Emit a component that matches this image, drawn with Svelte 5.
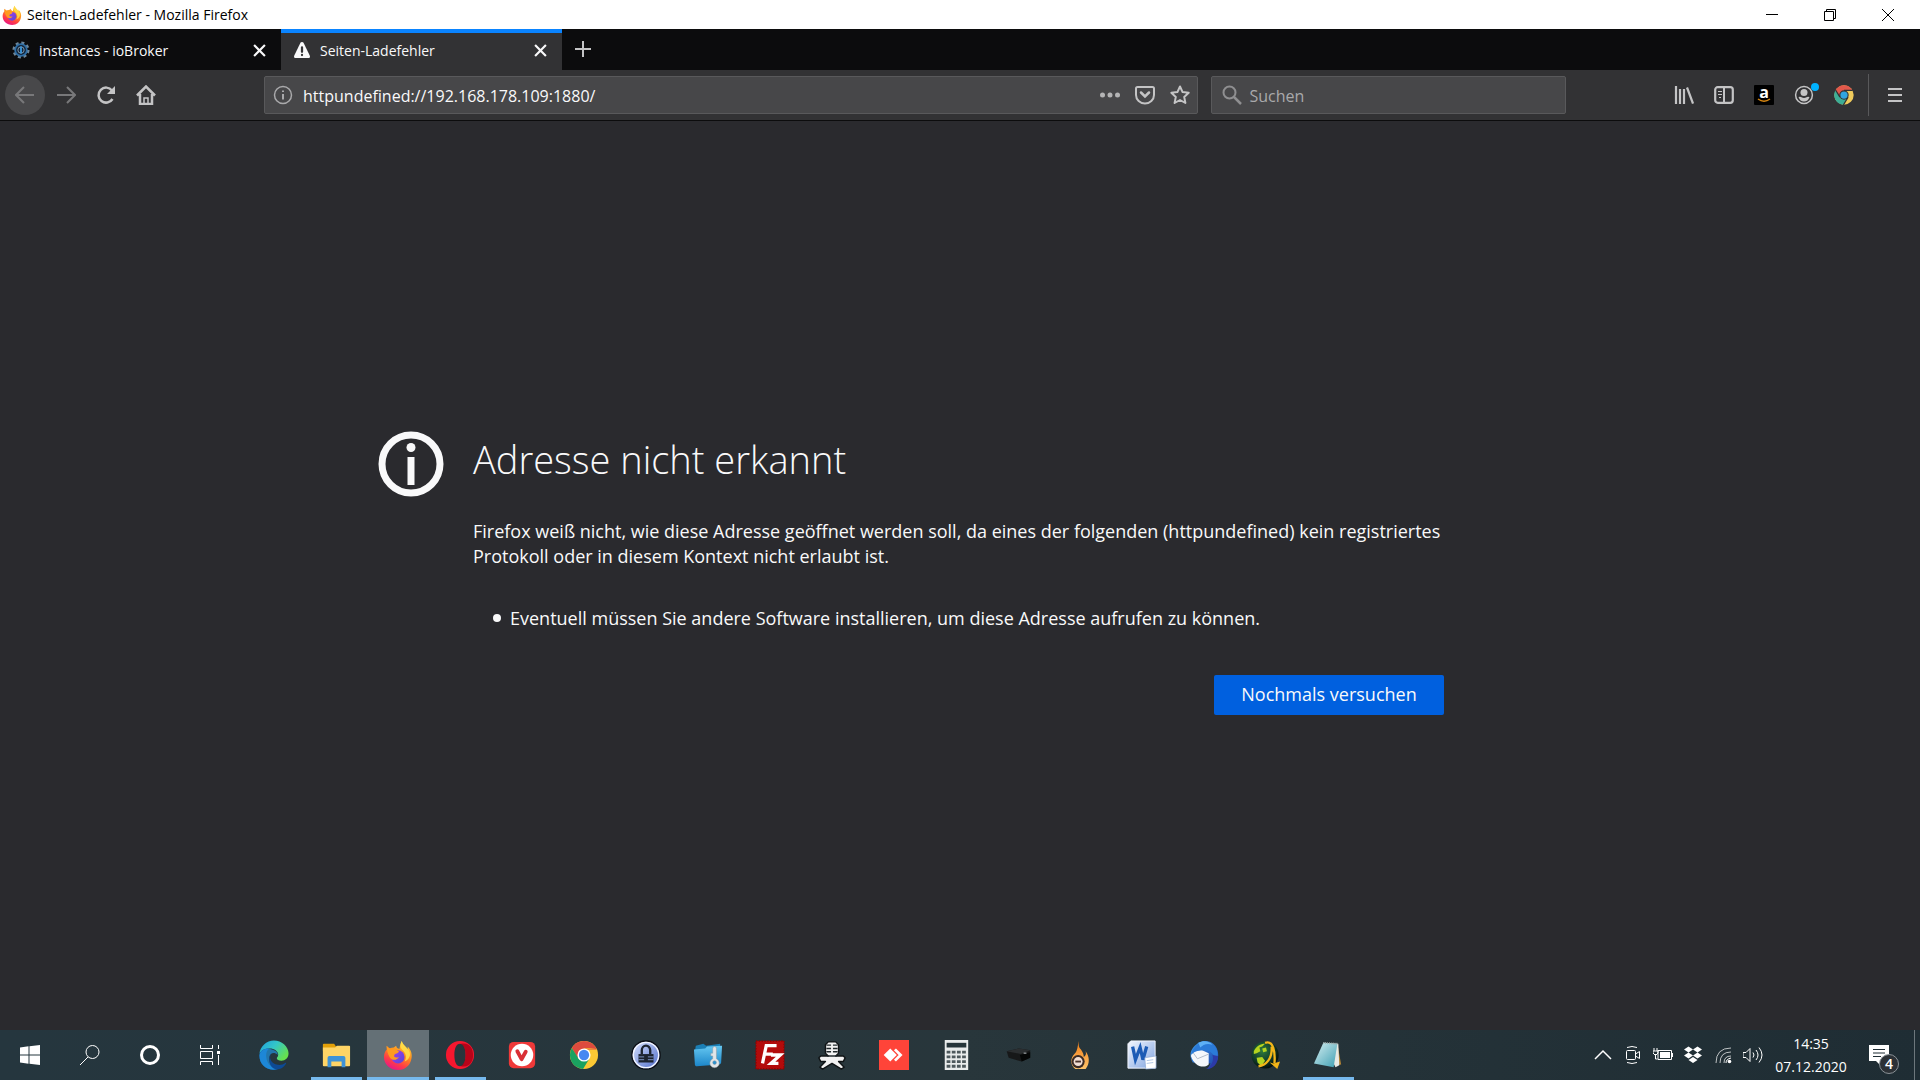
<script lang="ts">
    let url = "httpundefined://192.168.178.109:1880/";
    let search = "";

    let tabs = [
        { title: "instances - ioBroker", icon: "gear" },
        { title: "Seiten-Ladefehler", icon: "warning" },
    ];
    let activeTab = 1;

    const apps = [
        { name: "Microsoft Edge", icon: edge },
        { name: "Explorer", icon: explorer, running: true },
        { name: "Firefox", icon: firefox, running: true, active: true },
        { name: "Opera", icon: opera, running: true },
        { name: "Vivaldi", icon: vivaldi },
        { name: "Chrome", icon: chrome },
        { name: "KeePass", icon: keepass },
        { name: "WinSCP", icon: keyFolder },
        { name: "FileZilla", icon: filezilla },
        { name: "Aufnahme", icon: mic },
        { name: "AnyDesk", icon: anydesk },
        { name: "Rechner", icon: calculator },
        { name: "Drucker", icon: printer },
        { name: "Brennen", icon: flame },
        { name: "Word", icon: word },
        { name: "Thunderbird", icon: thunderbird },
        { name: "JDownloader", icon: jdownloader },
        { name: "Editor", icon: notepad, running: true },
    ];
</script>

{#snippet firefox()}
    <svg viewBox="0 0 32 32">
        <path fill="url(#ff-body)" d="M20 1c1 4 4 5 6 9 .5-1 .5-2 .3-3 4 4 5 9 4 13-1 7-7 12-14 12C8 32 1 26 1 18c0-3 1-6 3-8l-.2-4C5 7 6 8 7 9c1.300-.7 3-1 4.500-1L14 6c.3 2 1.500 3 3.500 3.500C18 7 18.500 4 20 1z" />
        <path fill="#ffe14a" d="M20 1c-2 4-2 7 1 10 3 3 5 7 2 12 5-2 7-7 5-11-2-5-7-6-8-11z" opacity=".85" />
        <circle cx="16" cy="18" r="7" fill="url(#ff-core)" />
        <path fill="#ff9a1f" d="M4 6.500c2 2 3 2.500 4 2.500 3-1 5 .5 6 1.500l3 1.500c-1 3-4 2-5 4-1 3 3 3 5 2-2 4-8 4-10 0-2-3-3-7-3-11.500z" />
    </svg>
{/snippet}

{#snippet chrome()}
    <svg viewBox="0 0 32 32">
        <circle cx="16" cy="16" r="15" fill="#fcc934" />
        <path fill="#dd4b3e" d="M3 8.500A15 15 0 0 1 29 8.500L16 9 9.500 19.500z" />
        <path fill="#1aa260" d="M3 8.500A15 15 0 0 0 15 31L22 19.500 16 22 10 19.500z" />
        <path fill="#dd4b3e" d="M29 8.500A15 15 0 0 1 29.500 10H16z" />
        <circle cx="16" cy="16" r="7" fill="#fff" />
        <circle cx="16" cy="16" r="5.500" fill="#4688f1" />
    </svg>
{/snippet}

{#snippet chromeMuted()}
    <svg viewBox="0 0 32 32">
        <circle cx="16" cy="16" r="15.500" fill="#f0cb5c" />
        <path fill="#e2584b" d="M2.500 8A15.500 15.500 0 0 1 29.500 8.500H16L9.500 19.500z" />
        <path fill="#3dae96" d="M2.500 8A15.500 15.500 0 0 0 15 31.500L22 20 16 22 10 19.500z" />
        <path stroke="#323234" stroke-width="2" d="M16 8.500h14M9.500 19.500L2.500 8M22.500 19.500L15 32" />
        <circle cx="16" cy="16" r="7.500" fill="#323234" />
        <circle cx="16" cy="16" r="5.800" fill="#2fa4e0" />
    </svg>
{/snippet}

{#snippet edge()}
    <svg viewBox="0 0 32 32">
        <path fill="url(#edge-top)" d="M.5 15C1 7 8 .5 16 .5S31.500 7 31.500 14c0 5-3.500 8-7.500 8-3 0-5-1-5-2.500 0-1 1.500-1.500 1.500-4 0-4-5-7-10-6.500C6 9.500 2 11 .5 15z" />
        <path fill="#1570cc" d="M.5 16C1 11 6 8.500 11 9c-3 2-4 6-3 11 1 6 6 10 12 11C9 34 0 26 .5 16z" />
        <path fill="#2191dc" d="M.5 16C2 10 9 8.500 14 10c4 1 6 3 6 6-4-4-8-2-9 2-1 6 3 12 9 13C8 34 0 26 .5 16z" opacity=".7" />
        <path fill="#0d4a94" d="M13 14.500c-3 5 0 11 7 12 3 .5 6-.5 8-2 .8-.5 1.200 0 .8.800C25 31 20 32 17 31c-6-2-8-11-4-16.500z" />
    </svg>
{/snippet}

{#snippet explorer()}
    <svg viewBox="0 0 32 32">
        <path fill="#e3a008" d="M2 5a1 1 0 0 1 1-1h11l2 3H30v5H2z" />
        <path fill="#ffd566" d="M2 8h13l2-2h13a1 1 0 0 1 1 1v20a1 1 0 0 1-1 1H3a1 1 0 0 1-1-1z" />
        <path fill="#3f93d6" d="M7 19a2 2 0 0 1 2-2h15a2 2 0 0 1 2 2v10h-4v-6H11v6H7z" />
    </svg>
{/snippet}

{#snippet opera()}
    <svg viewBox="0 0 32 32">
        <path fill="#f5172f" fill-rule="evenodd" d="M16 1a15 15 0 1 0 0 30 15 15 0 0 0 0-30zm0 3c4 0 6 5 6 12s-2 12-6 12-6-5-6-12 2-12 6-12z" />
        <path fill="#a70014" d="M17 4c9-2 13 5 13 12s-4 14-13 12c3-2 5-6 5-12s-2-10-5-12z" opacity=".8" />
    </svg>
{/snippet}

{#snippet vivaldi()}
    <svg viewBox="0 0 32 32">
        <rect x="2" y="2" width="28" height="28" rx="5" fill="#ef3939" />
        <circle cx="16" cy="16" r="12" fill="#fff" />
        <path d="M11 12l4.500 8.500 4.500-8" fill="none" stroke="#d92f35" stroke-width="4" stroke-linecap="round" stroke-linejoin="round" />
    </svg>
{/snippet}

{#snippet keepass()}
    <svg viewBox="0 0 32 32">
        <circle cx="16" cy="16" r="15" fill="url(#kp)" stroke="#0b0d12" stroke-width="1.500" />
        <circle cx="16" cy="16" r="13.500" fill="none" stroke="#f2f5ff" stroke-width="1.500" />
        <path d="M11.500 15v-4a4.500 5 0 0 1 9 0v4" fill="none" stroke="#1c2330" stroke-width="2.500" />
        <path fill="#1c2330" d="M8 15h16v9H8z" />
        <path stroke="#8096c8" d="M8 18h6m4 0h6M8 21h6m4 0h6" />
    </svg>
{/snippet}

{#snippet keyFolder()}
    <svg viewBox="0 0 32 32">
        <path fill="#1b7fb5" d="M3 6l8-2 3 2 15-2v8H2z" />
        <path fill="url(#kf)" d="M1 10l12-1 2-2 16-1-1 18c0 1-1 2-2 2L4 28c-1 0-2-1-2-2z" />
        <path fill="#e2e5e8" stroke="#8c969d" stroke-width=".5" fill-rule="evenodd" d="M21 9a2 2 0 0 1 4 0v11a5 5 0 1 1-4 0v-3h-2v-3h2zm2 13a2 2 0 1 0 0 4 2 2 0 0 0 0-4z" />
    </svg>
{/snippet}

{#snippet filezilla()}
    <svg viewBox="0 0 32 32">
        <rect x="1" y="1" width="30" height="30" fill="#b30b0b" stroke="#8a0505" stroke-width="1.500" stroke-dasharray="1.500 1.500" />
        <path d="M8 25l4-19h11M10 15h9M17 16h10l-10 9h8" fill="none" stroke="#fff" stroke-width="3.500" />
    </svg>
{/snippet}

{#snippet mic()}
    <svg viewBox="0 0 32 32">
        <path d="M12 2h8l3 3v9l-3 3h8l2 2-2 4h-5l6 6-3 2-10-6-10 6-3-2 6-6H4l-2-4 2-2h8l-3-3V5z" fill="#f2f2f2" stroke="#101416" stroke-width="1.500" stroke-linejoin="round" />
        <path d="M10 5.500h5m2 0h5M10 9h5m2 0h5M10 12.500h5m2 0h5M11 17h10" stroke="#20282b" stroke-width="1.500" />
    </svg>
{/snippet}

{#snippet anydesk()}
    <svg viewBox="0 0 32 32">
        <path fill="#ff4439" d="M0 0h32v32H0z" />
        <path fill="#fff" d="M5 16l7-7 7 7-7 7z" />
        <path d="M17 10l6 6-6 6" fill="none" stroke="#fff" stroke-width="3" />
    </svg>
{/snippet}

{#snippet calculator()}
    <svg viewBox="0 0 32 32">
        <rect x="4" y="0" width="25" height="32" fill="#e9ecec" />
        <path fill="#26353a" d="M6 3h21v5H6z" />
        <path stroke="#4d585c" stroke-width="3" stroke-dasharray="4 1.500" d="M6 13h21M6 18h21M6 23h21M6 28h21" />
    </svg>
{/snippet}

{#snippet printer()}
    <svg viewBox="0 0 32 32">
        <path fill="#171819" d="M4 12l13-3 12 2v8l-9 4-14-4z" />
        <path fill="#2b2e30" d="M4 12l13-3 12 2-10 4z" />
        <path fill="#050606" d="M18 16l11-3v6l-9 4z" />
        <path stroke="#c8ced0" d="M22 14h3" />
    </svg>
{/snippet}

{#snippet flame()}
    <svg viewBox="0 0 32 32">
        <path fill="url(#flame)" d="M15 1c-1 5 0 7 2 9 2 3 3 5 3 8 2-1 3-3 2-6 4 5 5 13 0 19H11C5 26 6 19 10 15c4-4 3-9 5-14z" />
        <circle cx="14" cy="23" r="7" fill="#3b2b25" />
        <circle cx="14" cy="23" r="4.800" fill="#f1ddd3" />
        <path stroke="#4a332b" stroke-width="2" d="M11 23h6" />
    </svg>
{/snippet}

{#snippet word()}
    <svg viewBox="0 0 32 32">
        <path fill="url(#word)" stroke="#f4f8ff" d="M4 1h26v29H1V4z" />
        <path d="M6 7l3 14 5-13 3 13 4-14" fill="none" stroke="#1c5bb5" stroke-width="3.500" />
        <path fill="#fff" stroke="#8ba7d2" stroke-width=".7" d="M19 19l12-2v13l-11 1z" />
        <path stroke="#aec4e4" d="M21 22l7-1M21 25l7-1" />
    </svg>
{/snippet}

{#snippet thunderbird()}
    <svg viewBox="0 0 32 32">
        <path fill="url(#tb)" d="M10 3c9-5 20 0 21 11 1 8-3 14-11 17l3-6L4 24C-1 15 2 9 10 3z" />
        <path fill="#f4f7fb" d="M2 17c2-5 7-6 12-6l7 3v12c-6 5-15 2-19-9z" />
        <path d="M4 13l5 7 12-5" fill="none" stroke="#aeb9c7" />
        <path fill="#2b7bd8" d="M6 8c4-6 14-8 20-3 5 4 6 12 3 18-1-7-6-12-13-12-4 0-8 0-13 4 0-3 1-5 3-7z" />
        <path fill="#5db0f5" d="M10 3c5-3 12-2 15 2-6-2-10 0-13 3z" />
        <path fill="#2c3aa8" d="M25 16c2 6-1 12-7 15 8 0 13-6 13-14z" />
    </svg>
{/snippet}

{#snippet jdownloader()}
    <svg viewBox="0 0 32 32">
        <circle cx="15" cy="16" r="14.500" fill="url(#globe)" />
        <path fill="#b4d41f" d="M3 12c3-6 7-8 12-8l-3 3-3 1 1 4-4 2-3 1zM12 9l4-1 1 4-4 1zM6 19l6-1 3 4-4 6-4-4z" />
        <path d="M15 3c9-3 11 10 10 22M8 28c8-1 15-8 14-21" fill="none" stroke="#f2b519" stroke-width="2.500" />
        <path fill="#f2b519" d="M20 24l4 1 7-2-3 8z" />
    </svg>
{/snippet}

{#snippet notepad()}
    <svg viewBox="0 0 32 32">
        <path fill="#b38434" d="M26 4l4 22-5 1z" />
        <path fill="#e8e9e3" d="M11 3l16 1 1 23-4 2z" />
        <path fill="url(#note)" d="M11 3l15 1-4 25-21-4z" />
        <path stroke="#9da9a8" stroke-width="2" stroke-dasharray="1 1" d="M11 3l15 1" />
    </svg>
{/snippet}

<!-- gradients shared by the application icons -->
<svg class="defs" aria-hidden="true">
    <defs>
        <linearGradient id="ff-body" x1=".8" y1="0" x2=".3" y2="1">
            <stop offset="0" stop-color="#ffdf3c" />
            <stop offset=".45" stop-color="#ff8a1e" />
            <stop offset=".75" stop-color="#ff3b47" />
            <stop offset="1" stop-color="#e5158b" />
        </linearGradient>
        <linearGradient id="ff-core" x1="0" y1="0" x2="1" y2="1">
            <stop offset="0" stop-color="#a63bea" />
            <stop offset="1" stop-color="#5548d9" />
        </linearGradient>
        <linearGradient id="edge-top" x1="0" y1="0" x2="1" y2=".6">
            <stop offset="0" stop-color="#1f9de0" />
            <stop offset=".5" stop-color="#33c6c8" />
            <stop offset="1" stop-color="#66e04e" />
        </linearGradient>
        <linearGradient id="kp" x2="1" y2="1">
            <stop offset="0" stop-color="#dbe5ff" />
            <stop offset="1" stop-color="#4a68c9" />
        </linearGradient>
        <linearGradient id="kf" x2="0" y2="1">
            <stop offset="0" stop-color="#66c8f2" />
            <stop offset="1" stop-color="#1c86c9" />
        </linearGradient>
        <linearGradient id="flame" x2="0" y2="1">
            <stop offset="0" stop-color="#f07c16" />
            <stop offset="1" stop-color="#ffc46a" />
        </linearGradient>
        <linearGradient id="word" x2="1" y2="1">
            <stop offset="0" stop-color="#f4f8ff" />
            <stop offset="1" stop-color="#7fa3e0" />
        </linearGradient>
        <linearGradient id="tb" x2="1" y2="1">
            <stop offset="0" stop-color="#3f9fee" />
            <stop offset="1" stop-color="#1c3ea6" />
        </linearGradient>
        <radialGradient id="globe" cx=".4" cy=".35" r=".65">
            <stop offset="0" stop-color="#2f7a3c" />
            <stop offset=".6" stop-color="#12402c" />
            <stop offset="1" stop-color="#06100e" />
        </radialGradient>
        <linearGradient id="note" x2="1" y2="1">
            <stop offset="0" stop-color="#d6eff2" />
            <stop offset="1" stop-color="#3e9fb2" />
        </linearGradient>
    </defs>
</svg>

<div class="desktop">
    <header class="titlebar">
        <span class="logo">{@render firefox()}</span>
        <span class="caption">Seiten-Ladefehler - Mozilla Firefox</span>
        <div class="window-buttons">
            <button aria-label="Minimieren">
                <svg viewBox="0 0 12 12"><path d="M0 5.500h12" /></svg>
            </button>
            <button aria-label="Verkleinern">
                <svg viewBox="0 0 12 12"><path d="M.5 2.500h9v9h-9zM2.500 2.500v-2h9v9h-2" /></svg>
            </button>
            <button aria-label="Schließen">
                <svg viewBox="0 0 12 12"><path d="M0 0l12 12M12 0L0 12" /></svg>
            </button>
        </div>
    </header>

    <nav class="tabs">
        {#each tabs as tab, i}
            <div class="tab" class:selected={i === activeTab}>
                <button class="tab-label" on:click={() => (activeTab = i)}>
                    {#if tab.icon === "gear"}
                        <svg viewBox="0 0 20 20">
                            <circle cx="10" cy="10" r="8" fill="none" stroke="#6f8799" stroke-width="3" stroke-dasharray="3.300 3" />
                            <circle cx="10" cy="10" r="6.500" fill="#10243a" stroke="#2f6ea5" stroke-width="2" />
                            <circle cx="10" cy="10" r="3.500" stroke="#8fa3b0" stroke-width="1" />
                            <path stroke="#3d9be0" stroke-width="2" d="M10 6v8" />
                        </svg>
                    {:else}
                        <svg viewBox="0 0 20 20">
                            <path fill="#f9f9fa" d="M10 1c.8 0 1.400.4 1.700 1l7 14.300c.6 1.300-.2 2.700-1.700 2.700H3c-1.500 0-2.300-1.400-1.700-2.700L8.300 2c.3-.6.900-1 1.700-1z" />
                            <path stroke="#323234" stroke-width="2.500" stroke-linecap="round" d="M10 7v5M10 15.500v.1" />
                        </svg>
                    {/if}
                    <span>{tab.title}</span>
                </button>
                <button class="tab-close" aria-label="Tab schließen">
                    <svg viewBox="0 0 12 12"><path d="M1 1l10 10M11 1L1 11" /></svg>
                </button>
            </div>
        {/each}
        <button class="new-tab" aria-label="Neuer Tab">
            <svg viewBox="0 0 18 18"><path d="M9 1v16M1 9h16" /></svg>
        </button>
    </nav>

    <div class="toolbar">
        <div class="nav-buttons">
            <button class="back" aria-label="Zurück" disabled>
                <svg viewBox="0 0 20 20"><path d="M19 10H2M9 2l-8 8 8 8" /></svg>
            </button>
            <button class="dim" aria-label="Vor" disabled>
                <svg viewBox="0 0 20 20"><path d="M1 10h17M11 2l8 8-8 8" /></svg>
            </button>
            <button aria-label="Neu laden">
                <svg viewBox="0 0 20 20">
                    <path d="M16 5.500A7.500 7.500 0 1 0 16.500 14" stroke-width="2.500" />
                    <path d="M19 1v8h-8z" fill="#c4c4c5" stroke="none" />
                </svg>
            </button>
            <button aria-label="Startseite">
                <svg viewBox="0 0 20 20">
                    <path d="M1 10.500L10 1.500l9 9M4 9v10h12V9" stroke-width="2.500" />
                    <path d="M8 19v-6h4v6" stroke-width="1.500" />
                </svg>
            </button>
        </div>

        <div class="field urlbar">
            <svg class="info" viewBox="0 0 20 20">
                <circle cx="10" cy="10" r="8.500" />
                <path d="M10 9v5.500M10 5.500v1.500" stroke-width="2" />
            </svg>
            <input type="text" aria-label="Adresse" spellcheck="false" bind:value={url} />
            <button aria-label="Seitenaktionen">
                <svg viewBox="0 0 20 20">
                    <g fill="#b4b4b5" stroke="none">
                        <circle cx="2.500" cy="10" r="2.500" /><circle cx="10" cy="10" r="2.500" /><circle cx="17.500" cy="10" r="2.500" />
                    </g>
                </svg>
            </button>
            <button aria-label="Bei Pocket speichern">
                <svg viewBox="0 0 20 20">
                    <path d="M2.500 2h15q1.500 0 1.500 1.500V10a9 8.500 0 0 1-18 0V3.500Q1 2 2.500 2z" />
                    <path d="M6 7.500l4 4 4-4" stroke-width="2.500" stroke-linecap="round" />
                </svg>
            </button>
            <button aria-label="Lesezeichen setzen">
                <svg viewBox="0 0 20 20">
                    <path d="M10 1.500l2.600 5.600 6.100.7-4.500 4.100 1.200 6.100L10 15l-5.400 3 1.200-6.100L1.300 7.800l6.100-.7z" stroke-linejoin="round" />
                </svg>
            </button>
        </div>

        <label class="field searchbar">
            <svg class="loupe" viewBox="0 0 20 20">
                <circle cx="7.500" cy="7.500" r="6" />
                <path d="M12 12l7 7" stroke-width="2.500" />
            </svg>
            <input type="text" aria-label="Suchen" placeholder="Suchen" bind:value={search} />
        </label>

        <div class="tools">
            <button aria-label="Bibliothek">
                <svg viewBox="0 0 20 20"><path d="M2 1v18M6 4v15M10 4v15M13 2.500l6 16" stroke-width="2.200" /></svg>
            </button>
            <button aria-label="Seitenleiste">
                <svg viewBox="0 0 20 20">
                    <rect x="1.200" y="2.200" width="17.600" height="15.600" rx="2.500" stroke-width="2.200" />
                    <path d="M10 2v16" /><path d="M4 6.500h4M4 9.500h4M5 12.500h2" stroke-width="1.200" />
                </svg>
            </button>
            <button aria-label="Amazon">
                <svg viewBox="0 0 20 20" class="amazon">
                    <rect width="20" height="20" rx="1" fill="#000" stroke="none" />
                    <text x="10" y="13" text-anchor="middle">a</text>
                    <path d="M4 14q6 4.500 12 0" stroke="#d58512" stroke-width="1.500" />
                </svg>
            </button>
            <button aria-label="Konto" class="account">
                <svg viewBox="0 0 20 20">
                    <circle cx="10" cy="10" r="8.400" stroke-width="1.500" />
                    <circle cx="10" cy="7.500" r="3.500" fill="#c4c4c5" stroke="none" />
                    <path fill="#c4c4c5" stroke="none" d="M4.500 12q2-.8 3 .3 2.500 1.500 5 0 1-1.100 3-.3-1.500 4.500-5.500 4.500T4.500 12z" />
                </svg>
                <span class="dot"></span>
            </button>
            <button aria-label="Chrome-Erweiterung" class="extension">{@render chromeMuted()}</button>
        </div>
        <button class="menu" aria-label="Menü öffnen">
            <svg viewBox="0 0 16 16"><path d="M1 2h14M1 8h14M1 14h14" /></svg>
        </button>
    </div>

    <main>
        <section class="error">
            <svg class="error-icon" viewBox="0 0 66 66">
                <circle cx="33" cy="33" r="29" fill="none" stroke="#f9f9fa" stroke-width="7" />
                <circle cx="33" cy="16.500" r="4.500" fill="#f9f9fa" />
                <path fill="#f9f9fa" d="M29.500 26h7v28h-7z" />
            </svg>
            <div class="error-text">
                <h1>Adresse nicht erkannt</h1>
                <p>
                    Firefox weiß nicht, wie diese Adresse geöffnet werden soll, da eines der folgenden (httpundefined) kein registriertes
                    Protokoll oder in diesem Kontext nicht erlaubt ist.
                </p>
                <ul>
                    <li>Eventuell müssen Sie andere Software installieren, um diese Adresse aufrufen zu können.</li>
                </ul>
                <button class="retry">Nochmals versuchen</button>
            </div>
        </section>
    </main>

    <footer class="taskbar">
        <div class="system">
            <button aria-label="Start">
                <svg viewBox="0 0 20 20"><path fill="#fff" stroke="none" d="M0 2.500L8.500 1.300v8.200H0zM9.500 1.200L20 0v9.500H9.500zM0 10.500h8.500v8.200L0 17.500zM9.500 10.500H20V20L9.500 18.800z" /></svg>
            </button>
            <button aria-label="Suche">
                <svg viewBox="0 0 20 20"><circle cx="12.500" cy="7" r="6.500" /><path d="M8 12l-8 8" /></svg>
            </button>
            <button aria-label="Cortana">
                <svg viewBox="0 0 20 20"><circle cx="10" cy="10" r="8.500" stroke-width="3" /></svg>
            </button>
            <button aria-label="Taskansicht">
                <svg viewBox="0 0 20 20">
                    <path d="M.5 0v3.500h12V0M.5 6.500h12v7H.5zM.5 20v-3.500h12V20M18.500 0v4M18.500 10v10" />
                    <path d="M17 6h3v3h-3z" fill="#fff" stroke="none" />
                </svg>
            </button>
        </div>

        <div class="apps">
            {#each apps as app}
                <button aria-label={app.name} class:running={app.running} class:active={app.active}>
                    {@render app.icon()}
                </button>
            {/each}
        </div>

        <div class="tray">
            <button aria-label="Ausgeblendete Symbole">
                <svg viewBox="0 0 20 20"><path d="M2 14l8-8 8 8" stroke-width="1.500" /></svg>
            </button>
            <button aria-label="Jetzt besprechen">
                <svg viewBox="0 0 20 20"><rect x="3.500" y="5.500" width="9" height="9" rx="1" /><path d="M12.500 9l4-2.500v7l-4-2.500M4 2.500q5-2 10 0M4 17.500q5 2 10 0" /></svg>
            </button>
            <button aria-label="Akku">
                <svg viewBox="0 0 20 20">
                    <path d="M5 5.500h13.500v9H5zM2.500 9v5h2M1 3v3M4 3v3M0 6h5v2L3 10H2L0 8z" />
                    <path d="M7 7h10v6H7zM18.500 8H20v4h-1.500z" fill="#fff" stroke="none" />
                </svg>
            </button>
            <button aria-label="Dropbox">
                <svg viewBox="0 0 20 20"><path fill="#fff" stroke="none" d="M5.500 1.500L10 4.500 5.500 7.500 1 4.500zM14.500 1.500L19 4.500l-4.500 3L10 4.500zM5.500 7.500l4.500 3-4.500 3-4.500-3zM14.500 7.500l4.500 3-4.500 3-4.500-3zM10 12l4.500 3-4.500 3-4.500-3z" /></svg>
            </button>
            <button aria-label="WLAN">
                <svg viewBox="0 0 20 20">
                    <path d="M3 18Q3 3 18 3M7 18Q7 7 18 7M11 18q0-7 7-7" opacity=".7" />
                    <path d="M13 18q0-4 5-5" /><circle cx="16.500" cy="16.500" r="1.800" fill="#fff" stroke="none" />
                </svg>
            </button>
            <button aria-label="Lautstärke">
                <svg viewBox="0 0 20 20"><path d="M0 7.500h3l4-4v13l-4-4H0zM10 7.500q2 2.500 0 5M13 5q4 5 0 10M16 2.500q6 7.500 0 15" /></svg>
            </button>
        </div>
        <div class="clock">
            <time>14:35</time>
            <time>07.12.2020</time>
        </div>
        <button class="notifications" aria-label="Benachrichtigungen">
            <svg viewBox="0 0 20 20">
                <path fill="#fff" d="M0 0h20v16h-9v4l-4-4H0z" />
                <path stroke="#1f2d34" d="M4 4.500h12M4 8h12M4 11.500h8" />
            </svg>
            <span class="badge">4</span>
        </button>
        <button class="peek" aria-label="Desktop anzeigen"></button>
    </footer>
</div>

<style>
    :global(body) {
        background: #2a2a2e;
    }

    .defs {
        position: absolute;
        width: 0;
        height: 0;
    }

    .desktop {
        display: flex;
        flex-direction: column;
        min-height: 100vh;
        font-family: "Open Sans", "Noto Sans", sans-serif;
        font-size: 14px;
        color: #f9f9fa;
    }

    svg {
        display: block;
        fill: none;
        flex: none;
    }

    button {
        display: flex;
        align-items: center;
        justify-content: center;
        padding: 0;
        border: 0;
        background: none;
        color: inherit;
        font: inherit;
    }

    /* title bar */
    .titlebar {
        display: flex;
        align-items: center;
        height: 29px;
        background: #fff;
        color: #000;
    }

    .logo svg {
        width: 20px;
        height: 20px;
        margin: 0 5px 0 2px;
    }

    .window-buttons {
        display: flex;
        height: 100%;
        margin: 0 3px 0 auto;
    }

    .window-buttons button {
        width: 58px;
    }

    .window-buttons svg {
        width: 12px;
        height: 12px;
        stroke: #000;
    }

    /* tabs */
    .tabs {
        display: flex;
        height: 41px;
        background: #0c0c0d;
    }

    .tab {
        display: flex;
        width: 281px;
        box-sizing: border-box;
        border-top: 4px solid transparent;
    }

    .tab.selected {
        border-top-color: #0a84ff;
        background: #323234;
    }

    .tab-label {
        flex: 1;
        justify-content: flex-start;
        gap: 9px;
        padding: 0 0 3px 12px;
    }

    .tab-label svg {
        width: 18px;
        height: 18px;
    }

    .tab-close {
        width: 44px;
        padding-bottom: 3px;
    }

    .tab-close svg {
        width: 13px;
        height: 13px;
        stroke: #f9f9fa;
        stroke-width: 2;
    }

    .new-tab {
        width: 42px;
        padding-bottom: 1px;
    }

    .new-tab svg {
        width: 18px;
        height: 18px;
        stroke: #c4c4c5;
        stroke-width: 2;
    }

    /* toolbar */
    .toolbar {
        display: flex;
        align-items: center;
        height: 50px;
        background: #323234;
        border-bottom: 1px solid #0c0c0d;
    }

    .toolbar svg {
        width: 20px;
        height: 20px;
        stroke: #c4c4c5;
        stroke-width: 2;
    }

    .nav-buttons {
        display: flex;
        padding-left: 5px;
        margin-right: 98px;
    }

    .nav-buttons button {
        width: 40px;
        height: 40px;
    }

    .nav-buttons .back {
        margin-right: 1px;
        border-radius: 50%;
        background: #48484a;
    }

    .toolbar .back svg,
    .toolbar .dim svg {
        stroke: #78787a;
    }

    .field {
        display: flex;
        align-items: center;
        height: 38px;
        box-sizing: border-box;
        border: 1px solid #59595b;
        border-radius: 2px;
        background: #474749;
    }

    .urlbar {
        flex: 936;
    }

    .searchbar {
        flex: 354;
        margin-left: 13px;
    }

    .field input {
        flex: 1;
        min-width: 0;
        padding: 2px 0 0;
        border: 0;
        outline: 0;
        background: none;
        color: #f9f9fa;
        font: inherit;
        font-size: 16px;
    }

    .field input::placeholder {
        color: #a9a9ab;
        opacity: 1;
    }

    .field button {
        width: 35px;
    }

    .toolbar .info {
        margin: 0 10px 0 8px;
        stroke: #a9a9ab;
        stroke-width: 1.5;
    }

    .toolbar .loupe {
        margin: 0 7px 0 10px;
        stroke: #8f8f91;
    }

    .tools {
        display: flex;
        margin-left: 98px;
        padding-right: 4px;
    }

    .tools button {
        width: 40px;
    }

    .toolbar .extension :global(svg) {
        width: 20px;
        height: 20px;
        stroke: none;
    }

    .amazon {
        overflow: visible;
    }

    .amazon text {
        fill: #fff;
        stroke: none;
        font-size: 16px;
        font-weight: 700;
    }

    .account {
        position: relative;
    }

    .dot {
        position: absolute;
        top: -2px;
        right: 5px;
        width: 8px;
        height: 8px;
        border-radius: 50%;
        background: #00b3ff;
    }

    .menu {
        width: 52px;
        height: 42px;
        border-left: 1px solid #59595b;
    }

    .toolbar .menu svg {
        width: 16px;
        height: 16px;
    }

    /* error page */
    main {
        display: flex;
        flex: 1;
        align-items: center;
        justify-content: center;
        background: #2a2a2e;
    }

    .error {
        display: flex;
        gap: 29px;
        width: 100%;
        max-width: 1164px;
        box-sizing: border-box;
        padding: 0 98px 9px 0;
    }

    .error-icon {
        width: 66px;
        height: 66px;
        margin-top: 3px;
    }

    .error-text {
        flex: 1;
        font-size: 18px;
        line-height: 25px;
    }

    h1 {
        margin: 0 0 29px;
        font-size: 38px;
        font-weight: 300;
        line-height: 62px;
    }

    p {
        margin: 0;
    }

    ul {
        margin: 37px 0 44px;
        padding-left: 20px;
        list-style: none;
    }

    li {
        display: flex;
        align-items: center;
        gap: 9px;
    }

    li::before {
        content: "";
        width: 8px;
        height: 8px;
        border-radius: 50%;
        background: #f9f9fa;
    }

    .retry {
        width: 230px;
        height: 40px;
        margin-left: auto;
        border-radius: 2px;
        background: #0060df;
    }

    /* taskbar */
    .taskbar {
        display: flex;
        height: 50px;
        background: linear-gradient(90deg, #25363e, #28363b 50%, #1f2d34);
        color: #fff;
    }

    .system {
        display: flex;
        margin-right: 3px;
    }

    .system button {
        width: 60px;
    }

    .system svg {
        width: 20px;
        height: 20px;
        stroke: #fff;
    }

    .apps {
        display: flex;
    }

    .apps button {
        position: relative;
        width: 62px;
    }

    .apps :global(svg) {
        width: 30px;
        height: 30px;
    }

    .apps .active {
        background: #647076;
    }

    .apps .running::after {
        content: "";
        position: absolute;
        right: 5px;
        bottom: 0;
        left: 6px;
        height: 3px;
        background: #76b9ed;
    }

    .apps .active::after {
        right: 0;
        left: 0;
    }

    .tray {
        display: flex;
        margin-left: auto;
    }

    .tray button {
        width: 30px;
    }

    .tray svg {
        width: 20px;
        height: 20px;
        stroke: #fff;
    }

    .clock {
        display: flex;
        flex-direction: column;
        align-items: center;
        justify-content: center;
        width: 86px;
        line-height: 23px;
    }

    .notifications {
        position: relative;
        width: 50px;
        margin-right: 10px;
    }

    .notifications svg {
        width: 20px;
        height: 20px;
    }

    .badge {
        position: absolute;
        top: 24px;
        left: 25px;
        width: 18px;
        height: 18px;
        border: 1px solid #8a9297;
        border-radius: 50%;
        background: #2c3136;
        font-size: 14px;
        font-weight: 600;
        line-height: 18px;
        text-align: center;
    }

    .peek {
        width: 6px;
        border-left: 1px solid #6d777c;
    }
</style>
